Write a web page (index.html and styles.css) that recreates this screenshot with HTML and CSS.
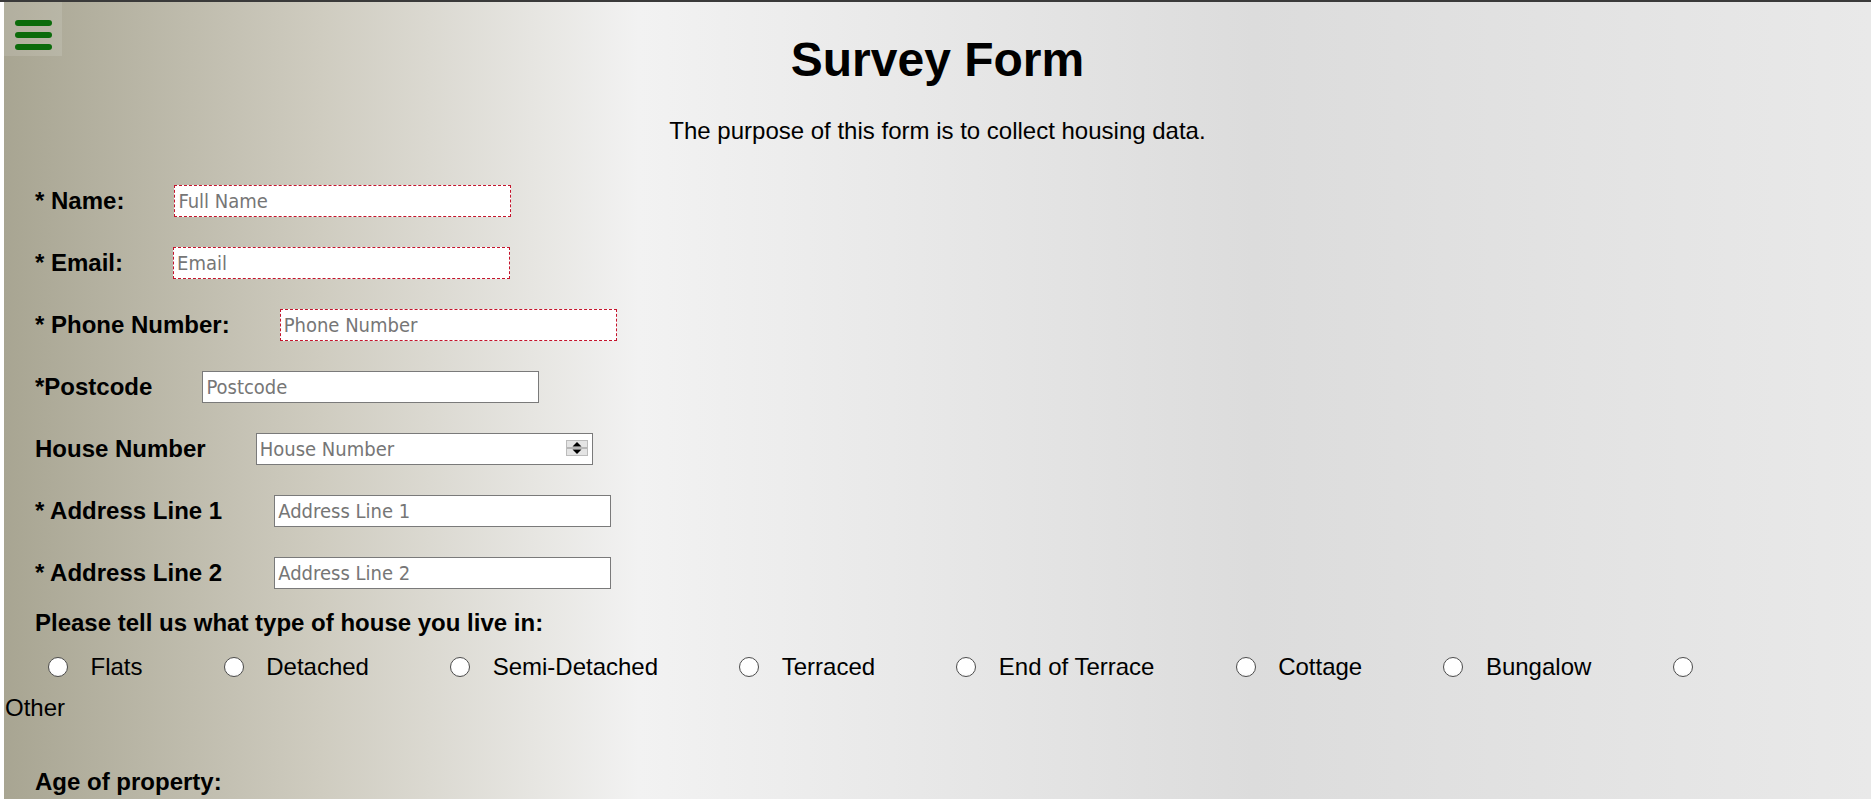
FILE: index.html
```html
<!DOCTYPE html>
<html lang="en">
<head>
<meta charset="utf-8">
<title>Survey Form</title>
<link rel="stylesheet" href="styles.css">
</head>
<body>
<button class="menu-toggle" type="button" aria-label="Menu">
  <span class="bar"></span>
  <span class="bar"></span>
  <span class="bar"></span>
</button>

<header class="page-header">
  <h1 id="title" class="title">Survey Form</h1>
  <p id="description" class="description">The purpose of this form is to collect housing data.</p>
</header>

<form id="survey-form" class="survey">
  <div class="fields">
    <div class="field">
      <label class="field-label" for="name">* Name:</label>
      <input id="name" class="input input-required" type="text" placeholder="Full Name">
    </div>
    <div class="field">
      <label class="field-label" for="email">* Email:</label>
      <input id="email" class="input input-required" type="email" placeholder="Email">
    </div>
    <div class="field">
      <label class="field-label" for="phone">* Phone Number:</label>
      <input id="phone" class="input input-required" type="tel" placeholder="Phone Number">
    </div>
    <div class="field">
      <label class="field-label" for="postcode">*Postcode</label>
      <input id="postcode" class="input" type="text" placeholder="Postcode">
    </div>
    <div class="field">
      <label class="field-label" for="house-number">House Number</label>
      <div class="number-wrap">
        <input id="house-number" class="input input-number" type="number" placeholder="House Number">
        <span class="spinner" aria-hidden="true">
          <svg width="22" height="16" viewBox="0 0 22 16">
            <rect x="0.5" y="0.5" width="21" height="15" fill="#e4e4e4" stroke="#bcbcbc"/>
            <line x1="1" y1="8" x2="21" y2="8" stroke="#8a8a8a"/>
            <path d="M6.5 6.5 L11 2 L15.5 6.5 Z" fill="#000"/>
            <path d="M6.5 9.5 L15.5 9.5 L11 14 Z" fill="#000"/>
          </svg>
        </span>
      </div>
    </div>
    <div class="field field-wide">
      <label class="field-label" for="address1">* Address Line 1</label>
      <input id="address1" class="input" type="text" placeholder="Address Line 1">
    </div>
    <div class="field field-wide">
      <label class="field-label" for="address2">* Address Line 2</label>
      <input id="address2" class="input" type="text" placeholder="Address Line 2">
    </div>
  </div>

  <p class="question">Please tell us what type of house you live in:</p>
  <div class="radios">
    <div class="option"><input class="radio" type="radio" name="house" id="flats"><label for="flats">Flats</label></div>
    <div class="option"><input class="radio" type="radio" name="house" id="detached"><label for="detached">Detached</label></div>
    <div class="option"><input class="radio" type="radio" name="house" id="semi"><label for="semi">Semi-Detached</label></div>
    <div class="option"><input class="radio" type="radio" name="house" id="terraced"><label for="terraced">Terraced</label></div>
    <div class="option"><input class="radio" type="radio" name="house" id="end"><label for="end">End of Terrace</label></div>
    <div class="option"><input class="radio" type="radio" name="house" id="cottage"><label for="cottage">Cottage</label></div>
    <div class="option"><input class="radio" type="radio" name="house" id="bungalow"><label for="bungalow">Bungalow</label></div>
    <div class="option"><input class="radio" type="radio" name="house" id="other"></div>
  </div>
  <label class="other-label" for="other">Other</label>

  <p class="question question-age">Age of property:</p>
</form>
</body>
</html>
```

FILE: styles.css
```css
html {
  background: #ffffff;
  border-top: 2px solid #3a3a3a;
}

body {
  margin: 0 0 0 4px;
  min-height: calc(100vh - 2px);
  position: relative;
  background: linear-gradient(to right, #a8a592 0%, #cfccc0 17%, #f2f2f2 34%, #dcdcdc 67%, #e9e9e9 100%);
  font-family: "Liberation Sans", Arial, sans-serif;
  color: #000;
}

.menu-toggle {
  position: absolute;
  left: 0;
  top: 0;
  width: 58px;
  height: 54px;
  box-sizing: border-box;
  padding: 18px 0 0 11px;
  margin: 0;
  border: none;
  background: rgba(255, 255, 255, 0.12);
  display: flex;
  flex-direction: column;
  gap: 6px;
  cursor: pointer;
}

.bar {
  display: block;
  width: 37px;
  height: 6px;
  border-radius: 3px;
  background: #0b6b0b;
}

.page-header {
  padding-top: 30px;
  text-align: center;
}

.title {
  margin: 0;
  font-size: 48px;
  font-weight: bold;
  line-height: normal;
}

.description {
  margin: 30px 0 0;
  font-size: 24px;
  line-height: normal;
}

.survey {
  margin: 40px 0 0;
  padding-bottom: 2px;
}

.fields {
  display: flex;
  flex-direction: column;
  gap: 30px;
}

.field {
  display: flex;
  align-items: center;
  gap: 50px;
  height: 32px;
  padding-left: 31px;
}

.field-wide {
  gap: 52px;
}

.field-label {
  font-size: 24px;
  font-weight: bold;
  line-height: normal;
}

.input {
  width: 337px;
  height: 32px;
  box-sizing: border-box;
  margin: 0;
  padding: 1px 3px;
  border: 1px solid #7a7a7a;
  border-radius: 0;
  background: #ffffff;
  font-family: "DejaVu Sans Condensed", "DejaVu Sans", sans-serif;
  font-size: 20px;
  color: #000;
  outline: none;
}

.input::placeholder {
  color: #767676;
}

.input-required {
  border: 1px dashed #c4142c;
}

.number-wrap {
  position: relative;
  display: flex;
}

.input-number {
  -moz-appearance: textfield;
}

.input-number::-webkit-inner-spin-button,
.input-number::-webkit-outer-spin-button {
  -webkit-appearance: none;
  margin: 0;
}

.spinner {
  position: absolute;
  top: 7px;
  right: 5px;
  width: 22px;
  height: 16px;
  display: block;
  line-height: 0;
}

.question {
  margin: 20px 0 0;
  padding-left: 31px;
  font-size: 24px;
  font-weight: bold;
  line-height: 28px;
}

.radios {
  display: flex;
  align-items: center;
  height: 28px;
  margin-top: 16px;
  padding-left: 44px;
}

.option {
  display: flex;
  align-items: center;
  gap: 22.5px;
  margin-right: 81.2px;
  font-size: 24px;
  line-height: 28px;
}

.radio {
  -webkit-appearance: none;
  appearance: none;
  width: 20px;
  height: 20px;
  margin: 0;
  box-sizing: border-box;
  border: 1px solid #4d4d4d;
  border-radius: 50%;
  background: radial-gradient(circle at 50% 40%, #ffffff 55%, #f1f1f1 100%);
}

.other-label {
  display: block;
  margin-top: 13px;
  padding-left: 1px;
  font-size: 24px;
  line-height: 28px;
}

.question-age {
  margin-top: 46px;
}
```
